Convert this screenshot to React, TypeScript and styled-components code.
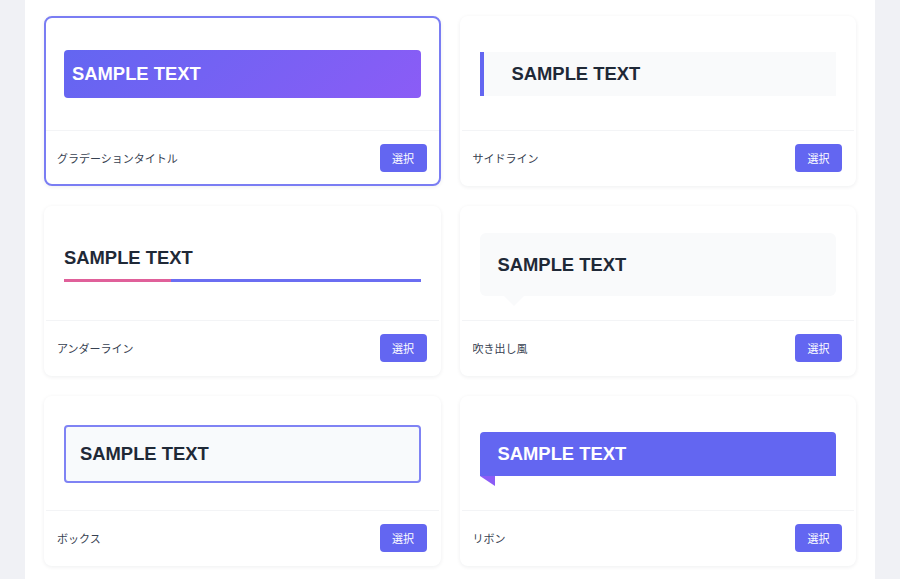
import React, { useState } from 'react';
import styled, { createGlobalStyle, css } from 'styled-components';

const GlobalStyle = createGlobalStyle`
  html, body {
    margin: 0;
    padding: 0;
    background: #f0f1f5;
    font-family: "Liberation Sans", "Noto Sans CJK JP", sans-serif;
  }
  * { box-sizing: border-box; }
`;

type Estilo = 'gradient' | 'side' | 'under' | 'bubble' | 'box' | 'ribbon';

const estilos: { id: Estilo; nome: string }[] = [
  { id: 'gradient', nome: 'グラデーションタイトル' },
  { id: 'side', nome: 'サイドライン' },
  { id: 'under', nome: 'アンダーライン' },
  { id: 'bubble', nome: '吹き出し風' },
  { id: 'box', nome: 'ボックス' },
  { id: 'ribbon', nome: 'リボン' },
];

// Renderiza o título de amostra conforme o estilo
const Amostra: React.FC<{ tipo: Estilo }> = ({ tipo }) => {
  switch (tipo) {
    case 'gradient':
      return <GradientTitle>SAMPLE TEXT</GradientTitle>;
    case 'side':
      return <SideTitle>SAMPLE TEXT</SideTitle>;
    case 'under':
      return (
        <UnderWrap>
          <UnderTitle>SAMPLE TEXT</UnderTitle>
          <UnderLine />
        </UnderWrap>
      );
    case 'bubble':
      return <BubbleTitle>SAMPLE TEXT</BubbleTitle>;
    case 'box':
      return <BoxTitle>SAMPLE TEXT</BoxTitle>;
    case 'ribbon':
      return <RibbonTitle>SAMPLE TEXT</RibbonTitle>;
  }
};

const App: React.FC = () => {
  const [selecionado, setSelecionado] = useState<Estilo>('gradient');

  return (
    <>
      <GlobalStyle />
      <Painel>
        <Grade>
          {estilos.map((e) => (
            <Cartao key={e.id} $ativo={selecionado === e.id}>
              <Preview>
                <Amostra tipo={e.id} />
              </Preview>
              <Rodape>
                <Nome>{e.nome}</Nome>
                <Botao onClick={() => setSelecionado(e.id)}>選択</Botao>
              </Rodape>
            </Cartao>
          ))}
        </Grade>
      </Painel>
    </>
  );
};

export default App;

// Estilos

const Painel = styled.main`
  width: 850px;
  min-height: 100vh;
  margin: 0 auto;
  background: #ffffff;
`;

const Grade = styled.div`
  display: grid;
  grid-template-columns: 1fr 1fr;
  column-gap: 19px;
  row-gap: 20px;
  padding: 16px 19px;
`;

const Cartao = styled.div<{ $ativo: boolean }>`
  height: 170px;
  background: #fff;
  border-radius: 8px;
  border: 2px solid ${(p) => (p.$ativo ? '#7a7df3' : 'transparent')};
  box-shadow: 0 1px 4px rgba(17, 24, 39, 0.07);
  display: flex;
  flex-direction: column;
`;

const Preview = styled.div`
  height: 113px;
  padding: 0 18px;
  display: flex;
  flex-direction: column;
  justify-content: center;
  border-bottom: 1px solid #f3f4f6;
`;

const Rodape = styled.div`
  flex: 1;
  display: flex;
  align-items: center;
  justify-content: space-between;
  padding: 0 12px 0 11px;
`;

const Nome = styled.span`
  font-size: 11px;
  color: #374151;
  font-family: "Noto Sans CJK JP", sans-serif;
`;

const Botao = styled.button`
  height: 28px;
  width: 47px;
  padding: 0;
  border: none;
  border-radius: 4px;
  background: #6366f1;
  color: #fff;
  font-size: 11px;
  font-family: "Noto Sans CJK JP", sans-serif;
  cursor: pointer;
`;

const textoBase = css`
  margin: 0;
  font-family: "Liberation Sans", Arial, sans-serif;
  font-size: 18.4px;
  font-weight: bold;
  color: #1f2937;
  line-height: 24px;
`;

const GradientTitle = styled.h2`
  ${textoBase};
  color: #fff;
  padding: 12px 8px;
  border-radius: 4px;
  background: linear-gradient(135deg, #6366f1, #8b5cf6);
`;

const SideTitle = styled.h2`
  ${textoBase};
  padding: 10px 28px;
  background: #f9fafb;
  border-left: 4px solid #6366f1;
`;

const UnderWrap = styled.div`
  display: flex;
  flex-direction: column;
`;

const UnderTitle = styled.h2`
  ${textoBase};
  line-height: 23px;
  padding-bottom: 10px;
`;

const UnderLine = styled.div`
  height: 3px;
  background: linear-gradient(to right, #e0609a 0 30%, #6b6ef2 30% 100%);
`;

const BubbleTitle = styled.h2`
  ${textoBase};
  position: relative;
  padding: 20px 18px;
  line-height: 23px;
  background: #f9fafb;
  border-radius: 6px;

  &::after {
    content: '';
    position: absolute;
    left: 24px;
    bottom: -10px;
    border-left: 10px solid transparent;
    border-right: 10px solid transparent;
    border-top: 10px solid #f9fafb;
  }
`;

const BoxTitle = styled.h2`
  ${textoBase};
  padding: 16px 14px;
  line-height: 22px;
  background: #f8fafc;
  border: 2px solid #7f83f4;
  border-radius: 4px;
`;

const RibbonTitle = styled.h2`
  ${textoBase};
  position: relative;
  color: #fff;
  padding: 10px 18px;
  background: #6366f1;
  border-radius: 4px 4px 0 0;

  &::after {
    content: '';
    position: absolute;
    left: 0;
    bottom: -10px;
    border-top: 10px solid #8b5cf6;
    border-left: 15px solid transparent;
  }
`;
